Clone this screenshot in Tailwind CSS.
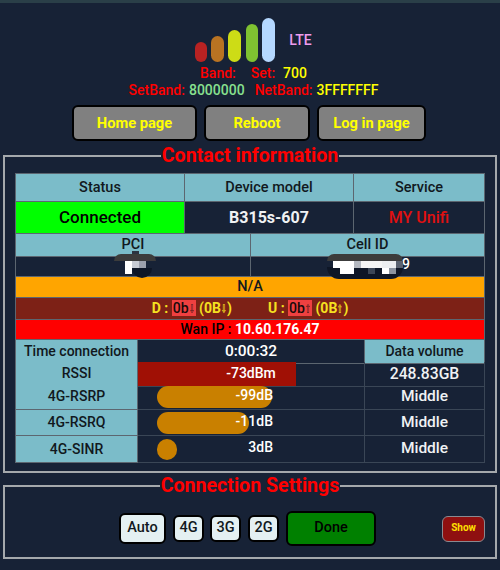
<!DOCTYPE html>
<html lang="en">
<head>
  <meta charset="UTF-8">
  <title>Device status</title>
  <script src="https://cdn.jsdelivr.net/npm/@tailwindcss/browser@4"></script>
</head>
<body class="bg-[#172236] font-['Roboto','DejaVu_Sans',sans-serif] w-[500px] h-[570px] overflow-hidden">
  <div class="h-[3px] bg-[#2a3f48]"></div>

  <!-- signal + bands -->
  <div class="h-[142px] flex flex-col items-center">
    <div class="flex items-end h-[44px] mt-[15px] ml-[7px]">
      <div class="w-[12px] h-[20px] rounded-full bg-[#b82222]"></div>
      <div class="w-[13px] h-[26px] rounded-full bg-[#b97322] ml-[4px]"></div>
      <div class="w-[13px] h-[32px] rounded-full bg-[#cddc16] ml-[4px]"></div>
      <div class="w-[12px] h-[38px] rounded-full bg-[#7fc231] ml-[5px]"></div>
      <div class="w-[13px] h-[44px] rounded-full bg-[#b5d8ff] ml-[4px]"></div>
      <div class="text-[14px] leading-[16px] font-medium text-[#ee9cee] ml-[14px] mb-[14px]">LTE</div>
    </div>
    <div class="flex text-[14px] leading-[17px] font-medium mt-[3px] ml-[7px] text-[#ff0000]">
      <span>Band:</span><span class="ml-[15px]">Set:</span><span class="ml-[8px] text-[#ffff00]">700</span>
    </div>
    <div class="flex text-[14px] leading-[17px] font-medium ml-[7px] text-[#ff0000]">
      <span>SetBand:</span><span class="ml-[4px] text-[#88e08f]">8000000</span><span class="ml-[10px]">NetBand:</span><span class="ml-[4px] text-[#ffff00]">3FFFFFFF</span>
    </div>
    <div class="flex gap-[7px] mt-[6px] -ml-[2px]">
      <button class="w-[125px] h-[36px] rounded-md border-2 border-black bg-[#808080] text-[#ffff00] text-[14.7px] font-bold">Home page</button>
      <button class="w-[106px] h-[36px] rounded-md border-2 border-black bg-[#808080] text-[#ffff00] text-[14.7px] font-bold">Reboot</button>
      <button class="w-[109px] h-[36px] rounded-md border-2 border-black bg-[#808080] text-[#ffff00] text-[14.7px] font-bold">Log in page</button>
    </div>
  </div>

  <!-- contact information -->
  <fieldset class="mx-[3px] h-[328px] border-2 border-[#a4a8ac] px-[10px]">
    <legend class="mx-auto px-[1px] h-[22px] text-[19.6px] leading-[22px] font-bold text-[#ff0000]">Contact information</legend>
    <div class="mt-[6px] w-[470px] border-l border-t border-[#5c6670] text-[14px] font-medium text-[#111820]">
      <div class="grid grid-cols-[169px_169px_131px] h-[28px] text-[14.5px]">
        <div class="flex items-center justify-center bg-[#7bbcc9] border-r border-b border-[#5c6670]">Status</div>
        <div class="flex items-center justify-center bg-[#7bbcc9] border-r border-b border-[#5c6670]">Device model</div>
        <div class="flex items-center justify-center bg-[#7bbcc9] border-r border-b border-[#5c6670]">Service</div>
      </div>
      <div class="grid grid-cols-[169px_169px_131px] h-[32px] text-[16px]">
        <div class="flex items-center justify-center bg-[#00ff00] text-black text-[17px] border-r border-b border-[#5c6670]">Connected</div>
        <div class="flex items-center justify-center font-bold text-[#f0f2f4] border-r border-b border-[#5c6670]">B315s-607</div>
        <div class="flex items-center justify-center text-[#e01010] border-r border-b border-[#5c6670]">MY Unifi</div>
      </div>
      <div class="grid grid-cols-[235px_234px] h-[21px] text-[14.5px]">
        <div class="flex items-center justify-center bg-[#7bbcc9] border-r border-b border-[#5c6670]">PCI</div>
        <div class="flex items-center justify-center bg-[#7bbcc9] border-r border-b border-[#5c6670]">Cell ID</div>
      </div>
      <div class="relative grid grid-cols-[235px_234px] h-[22px]">
        <div class="border-r border-b border-[#5c6670]"></div>
        <div class="border-r border-b border-[#5c6670]"></div>
        <!-- scribbled-out values -->
        <div class="absolute left-[116px] -top-[4px] w-[7px] h-[4px] bg-[#2c3440]"></div>
        <div class="absolute left-[98px] -top-[1px] w-[42px] h-[7px] bg-[#3c3c3c] rounded-t-full"></div>
        <div class="absolute left-[116px] top-[13px] w-[20px] h-[10px] bg-[#0e1626] rounded-b-full"></div>
        <div class="absolute left-[109px] top-[6px] flex">
          <div class="w-[7px] h-[13px] bg-white"></div>
          <div class="w-[7px] h-[7px] bg-[#c8ccd4]"></div>
          <div class="w-[7px] h-[7px] bg-[#9ca0ac]"></div>
        </div>
        <div class="absolute left-[311px] -top-[1px] w-[76px] h-[7px] bg-[#3c3c3c] rounded-t-full"></div>
        <div class="absolute left-[311px] top-[12px] w-[76px] h-[12px] bg-[#0e1626] rounded-b-full"></div>
        <div class="absolute left-[386px] top-[1px] text-[14px] leading-[16px] text-white">9</div>
        <div class="absolute left-[317px] top-[6px] flex h-[7px]">
          <div class="w-[21px] bg-white"></div>
          <div class="w-[7px] bg-[#b4b8c0]"></div>
          <div class="w-[21px] bg-[#f4f4f4]"></div>
          <div class="w-[14px] bg-[#eceef0]"></div>
          <div class="w-[7px] bg-[#5a6270]"></div>
        </div>
        <div class="absolute left-[324px] top-[13px] flex h-[6px]">
          <div class="w-[14px] bg-white"></div>
          <div class="w-[14px]"></div>
          <div class="w-[7px] bg-[#3c4656]"></div>
          <div class="w-[7px]"></div>
          <div class="w-[7px] bg-white"></div>
          <div class="w-[7px] bg-[#8c94a0]"></div>
        </div>
      </div>
      <div class="flex items-center justify-center h-[21px] bg-[#ffa500] border-r border-b border-[#5c6670] text-[14.5px]">N/A</div>
      <div class="flex items-center justify-center h-[22px] bg-[#7d2116] border-r border-b border-[#5c6670] text-[14px] font-bold text-[#f5e020]">
        <span>D : <span class="bg-[#ef4040] text-[#160a0a] font-medium px-[1px]">0b<span class="inline-block scale-x-[.6] -mx-[2px] text-[12px]">⇩</span></span> (0B<span class="inline-block scale-x-[.6] -mx-[2px] text-[12px]">⇩</span>)</span>
        <span class="ml-[36px]">U : <span class="bg-[#ef4040] text-[#160a0a] font-medium px-[1px]">0b<span class="inline-block scale-x-[.6] -mx-[2px] text-[12px]">⇧</span></span> (0B<span class="inline-block scale-x-[.6] -mx-[2px] text-[12px]">⇧</span>)</span>
      </div>
      <div class="flex items-center justify-center h-[20px] bg-[#ff0000] border-r border-b border-[#5c6670] text-black">
        Wan IP :&nbsp;<span class="font-bold text-white">10.60.176.47</span>
      </div>
      <div class="grid grid-cols-[122px_227px_120px] h-[22px]">
        <div class="flex items-center justify-center bg-[#7bbcc9] border-r border-b border-[#5c6670]">Time connection</div>
        <div class="flex items-center justify-center text-[15.5px] text-white border-r border-b border-[#5c6670]">0:00:32</div>
        <div class="flex items-center justify-center bg-[#7bbcc9] border-r border-b border-[#5c6670]">Data volume</div>
      </div>
      <div class="grid grid-cols-[122px_227px_120px] h-[22px]">
        <div class="flex items-center justify-center bg-[#7bbcc9] border-r border-b border-[#5c6670]">RSSI</div>
        <div class="relative border-r border-b border-[#3a4656]">
          <div class="w-[158px] h-full bg-[#a01005]"></div>
          <div class="absolute inset-0 flex items-center justify-center text-white">-73dBm</div>
        </div>
        <div class="flex items-center justify-center text-[15.7px] text-[#f0f2f4] border-r border-b border-[#3a4656]">248.83GB</div>
      </div>
      <div class="grid grid-cols-[122px_227px_120px] h-[26px]">
        <div class="flex items-center justify-center bg-[#7bbcc9] border-r border-b border-[#5c6670]">4G-RSRP</div>
        <div class="relative border-r border-b border-[#3a4656] pl-[19px] pt-[2px]">
          <div class="w-[115px] h-[22px] rounded-full bg-[#c98000]"></div>
          <div class="absolute left-0 w-[135px] top-[2px] text-right leading-[18px] text-white">-99dB</div>
        </div>
        <div class="flex items-center justify-center text-[15.5px] text-[#f0f2f4] border-r border-b border-[#3a4656]">Middle</div>
      </div>
      <div class="grid grid-cols-[122px_227px_120px] h-[26px]">
        <div class="flex items-center justify-center bg-[#7bbcc9] border-r border-b border-[#5c6670]">4G-RSRQ</div>
        <div class="relative border-r border-b border-[#3a4656] pl-[19px] pt-[2px]">
          <div class="w-[92px] h-[22px] rounded-full bg-[#c98000]"></div>
          <div class="absolute left-0 w-[135px] top-[2px] text-right leading-[18px] text-white">-11dB</div>
        </div>
        <div class="flex items-center justify-center text-[15.5px] text-[#f0f2f4] border-r border-b border-[#3a4656]">Middle</div>
      </div>
      <div class="grid grid-cols-[122px_227px_120px] h-[27px]">
        <div class="flex items-center justify-center bg-[#7bbcc9] border-r border-b border-[#5c6670]">4G-SINR</div>
        <div class="relative border-r border-b border-[#3a4656] pl-[19px] pt-[3px]">
          <div class="w-[20px] h-[21px] rounded-full bg-[#c98000]"></div>
          <div class="absolute left-0 w-[135px] top-[2px] text-right leading-[18px] text-white">3dB</div>
        </div>
        <div class="flex items-center justify-center text-[15.5px] text-[#f0f2f4] border-r border-b border-[#3a4656]">Middle</div>
      </div>
    </div>
  </fieldset>

  <!-- connection settings -->
  <fieldset class="mx-[3px] mt-[2px] h-[84px] border-2 border-[#a4a8ac]">
    <legend class="mx-auto px-[1px] h-[22px] text-[19.6px] leading-[22px] font-bold text-[#ff0000]">Connection Settings</legend>
    <div class="flex items-center h-[34px] mt-[14px] pl-[114px] text-[14.5px] font-medium text-[#111820]">
      <button class="w-[47px] h-[31px] rounded-md border-2 border-black bg-[#e4f0f2]">Auto</button>
      <button class="w-[31px] h-[27px] rounded-md border-2 border-black bg-[#e4f0f2] ml-[7px]">4G</button>
      <button class="w-[31px] h-[27px] rounded-md border-2 border-black bg-[#e4f0f2] ml-[6px]">3G</button>
      <button class="w-[31px] h-[27px] rounded-md border-2 border-black bg-[#e4f0f2] ml-[7px]">2G</button>
      <button class="w-[90px] h-[35px] rounded-md border-2 border-black bg-[#008000] text-black ml-[7px]">Done</button>
      <button class="w-[43px] h-[26px] rounded-md border border-[#8a8a90] bg-[#8f1010] text-[#ffe000] text-[10px] font-bold ml-[66px] mt-[1px] pb-[2px]">Show</button>
    </div>
  </fieldset>
</body>
</html>
